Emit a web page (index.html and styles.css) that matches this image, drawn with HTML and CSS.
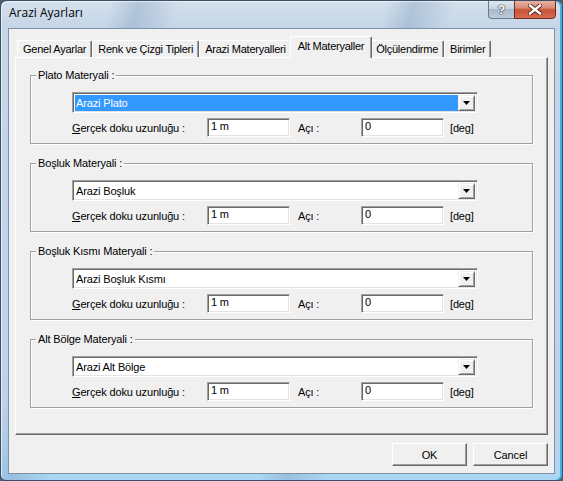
FILE: index.html
```html
<!DOCTYPE html>
<html>
<head>
<meta charset="utf-8">
<title>Arazi Ayarları</title>
<link rel="stylesheet" href="styles.css">
</head>
<body>
<div class="window">
  <div class="titlebar">
    <span class="title">Arazi Ayarları</span>
    <div class="caption-buttons">
      <div class="cbtn help"><span class="qmark">?</span></div>
      <div class="cbtn close">
        <svg width="14" height="11" viewBox="0 0 14 11">
          <path d="M2 1.5 L12 9.5 M12 1.5 L2 9.5" stroke="#5a1a12" stroke-width="4.2" stroke-linecap="square"/>
          <path d="M2 1.5 L12 9.5 M12 1.5 L2 9.5" stroke="#ffffff" stroke-width="2.4" stroke-linecap="square"/>
        </svg>
      </div>
    </div>
  </div>
  <div class="client">
    <div class="tabs">
      <div class="tab">Genel Ayarlar</div>
      <div class="tab">Renk ve Çizgi Tipleri</div>
      <div class="tab">Arazi Materyalleri</div>
      <div class="tab active">Alt Materyaller</div>
      <div class="tab">Ölçülendirme</div>
      <div class="tab">Birimler</div>
    </div>
    <div class="panel">
      <fieldset class="group">
        <legend>Plato Materyali :</legend>
        <div class="group-body">
          <div class="combo">
            <span class="combo-text selected">Arazi Plato</span>
            <span class="combo-btn"><svg width="7" height="4" viewBox="0 0 7 4"><polygon points="0,0 7,0 3.5,4" fill="#000"/></svg></span>
          </div>
          <div class="row">
            <span class="lbl"><u>G</u>erçek doku uzunluğu :</span>
            <span class="edit">1 m</span>
            <span class="lbl2">Açı :</span>
            <span class="edit">0</span>
            <span class="unit">[deg]</span>
          </div>
        </div>
      </fieldset>
      <fieldset class="group">
        <legend>Boşluk Materyali :</legend>
        <div class="group-body">
          <div class="combo">
            <span class="combo-text">Arazi Boşluk</span>
            <span class="combo-btn"><svg width="7" height="4" viewBox="0 0 7 4"><polygon points="0,0 7,0 3.5,4" fill="#000"/></svg></span>
          </div>
          <div class="row">
            <span class="lbl"><u>G</u>erçek doku uzunluğu :</span>
            <span class="edit">1 m</span>
            <span class="lbl2">Açı :</span>
            <span class="edit">0</span>
            <span class="unit">[deg]</span>
          </div>
        </div>
      </fieldset>
      <fieldset class="group">
        <legend>Boşluk Kısmı Materyali :</legend>
        <div class="group-body">
          <div class="combo">
            <span class="combo-text">Arazi Boşluk Kısmı</span>
            <span class="combo-btn"><svg width="7" height="4" viewBox="0 0 7 4"><polygon points="0,0 7,0 3.5,4" fill="#000"/></svg></span>
          </div>
          <div class="row">
            <span class="lbl"><u>G</u>erçek doku uzunluğu :</span>
            <span class="edit">1 m</span>
            <span class="lbl2">Açı :</span>
            <span class="edit">0</span>
            <span class="unit">[deg]</span>
          </div>
        </div>
      </fieldset>
      <fieldset class="group">
        <legend>Alt Bölge Materyali :</legend>
        <div class="group-body">
          <div class="combo">
            <span class="combo-text">Arazi Alt Bölge</span>
            <span class="combo-btn"><svg width="7" height="4" viewBox="0 0 7 4"><polygon points="0,0 7,0 3.5,4" fill="#000"/></svg></span>
          </div>
          <div class="row">
            <span class="lbl"><u>G</u>erçek doku uzunluğu :</span>
            <span class="edit">1 m</span>
            <span class="lbl2">Açı :</span>
            <span class="edit">0</span>
            <span class="unit">[deg]</span>
          </div>
        </div>
      </fieldset>
    </div>
    <div class="buttons">
      <div class="btn">OK</div>
      <div class="btn">Cancel</div>
    </div>
  </div>
</div>
</body>
</html>
```
FILE: styles.css
```css
* { box-sizing: border-box; }

html, body {
  margin: 0;
  padding: 0;
  background: #4b6076;
}

body {
  font-family: "Liberation Sans", Arial, sans-serif;
  font-size: 11px;
  letter-spacing: -0.15px;
  color: #000;
}

.window {
  width: 563px;
  height: 481px;
  display: flex;
  flex-direction: column;
  border: 1px solid #3b4f66;
  border-radius: 7px 7px 6px 6px;
  overflow: hidden;
  background:
    linear-gradient(105deg, transparent 0 16%, rgba(120,150,185,0.35) 20%, transparent 26%),
    linear-gradient(105deg, transparent 0 56%, rgba(120,150,185,0.35) 60%, transparent 66%),
    linear-gradient(to bottom, #d3dfeb 0, #c5d6e8 27px, #bcd3ea 90%, #a9d6f5 100%);
  box-shadow: inset -2px 0 0 #3bb2e4, inset 1px 1px 0 rgba(255,255,255,0.6);
}

.titlebar {
  height: 27px;
  flex: none;
  display: flex;
  justify-content: space-between;
  align-items: flex-start;
}

.title {
  font-family: "Open Sans", "Liberation Sans", sans-serif;
  font-size: 12px;
  letter-spacing: 0;
  line-height: 16px;
  padding: 4px 0 0 8px;
  color: #000;
}

.caption-buttons {
  display: flex;
  margin-right: 6px;
  margin-top: -1px;
}

.cbtn {
  height: 19px;
  display: flex;
  align-items: center;
  justify-content: center;
}

.cbtn.help {
  width: 26px;
  border: 1px solid #6b7b8f;
  border-right: none;
  border-radius: 0 0 0 4px;
  background: linear-gradient(to bottom, #dfe7ef 0, #c6d3e0 45%, #a9b9cb 50%, #bccbda 100%);
}

.qmark {
  font-family: "Liberation Sans", Arial, sans-serif;
  font-weight: bold;
  font-size: 13px;
  color: #fff;
  text-shadow: 0 0 1px #333, 0 0 1px #333, 0 0 1px #333;
}

.cbtn.close {
  width: 42px;
  border: 1px solid #6b2d24;
  border-radius: 0 0 4px 0;
  background: linear-gradient(to bottom, #e9b1a3 0, #d98d78 40%, #c8543a 52%, #d66a4e 100%);
}

.client {
  flex: none;
  height: 446px;
  margin: 0 7px;
  border: 1px solid #7f92a8;
  background: #f0f0f0;
  padding-top: 7px;
  display: flex;
  flex-direction: column;
}

.tabs {
  display: flex;
  align-items: flex-end;
  height: 22px;
  margin: 0 6px -1px 8px;
  position: relative;
  z-index: 1;
}

.tab {
  height: 17px;
  margin-bottom: 1px;
  padding: 1px 5px 0 5px;
  line-height: 14px;
  letter-spacing: -0.25px;
  background: #f0f0f0;
  border-top: 1px solid #fff;
  border-left: 1px solid #fff;
  border-right: 1px solid #696969;
  box-shadow: inset -1px 0 0 #a0a0a0;
  border-radius: 2px 2px 0 0;
  white-space: nowrap;
}

.tab.active {
  height: 22px;
  margin: 0 -2px;
  padding: 2px 7px 0 7px;
  position: relative;
  z-index: 2;
}

.panel {
  flex: none;
  height: 378px;
  margin: 0 6px;
  padding: 11px 14px 0 14px;
  background: #f0f0f0;
  border-top: 1px solid #fff;
  border-left: 1px solid #fff;
  border-right: 1px solid #696969;
  border-bottom: 1px solid #696969;
  box-shadow: inset -1px -1px 0 #a0a0a0;
}

.group {
  margin: 0 0 13px 0;
  padding: 0;
  min-width: 0;
  border: 1px solid #a0a0a0;
  box-shadow: 1px 1px 0 #fff, inset 1px 1px 0 #fff;
}

.group legend {
  margin-left: 5px;
  padding: 0 2px;
  line-height: 13px;
  font-size: 11px;
  background: #f0f0f0;
}

.group-body {
  padding: 10px 0 6px 41px;
}

.combo {
  width: 406px;
  height: 21px;
  display: flex;
  padding: 1px;
  border-top: 1px solid #a0a0a0;
  border-left: 1px solid #a0a0a0;
  border-right: 1px solid #fff;
  border-bottom: 1px solid #fff;
  box-shadow: inset 1px 1px 0 #696969, inset -1px -1px 0 #e3e3e3;
  background: #fff;
}

.combo-text {
  flex: 1;
  margin: 1px 0 0 1px;
  padding-left: 1px;
  line-height: 16px;
}

.combo-text.selected {
  background: #3399ff;
  color: #fff;
}

.combo-btn {
  width: 17px;
  margin: 1px 1px 0 0;
  display: flex;
  align-items: center;
  justify-content: center;
  background: #f0f0f0;
  border-top: 1px solid #f0f0f0;
  border-left: 1px solid #f0f0f0;
  border-right: 1px solid #696969;
  border-bottom: 1px solid #696969;
  box-shadow: inset 1px 1px 0 #fff, inset -1px -1px 0 #a0a0a0;
}

.row {
  display: flex;
  align-items: center;
  height: 19px;
  margin-top: 5px;
}

.lbl {
  width: 135px;
  white-space: nowrap;
}

.edit {
  width: 83px;
  height: 19px;
  padding: 0 0 0 3px;
  line-height: 15px;
  background: #fff;
  border-top: 1px solid #a0a0a0;
  border-left: 1px solid #a0a0a0;
  border-right: 1px solid #fff;
  border-bottom: 1px solid #fff;
  box-shadow: inset 1px 1px 0 #696969, inset -1px -1px 0 #e3e3e3;
}

.lbl2 {
  width: 71px;
  padding-left: 8px;
}

.unit {
  margin-left: 6px;
}

.buttons {
  display: flex;
  justify-content: flex-end;
  gap: 6px;
  margin-top: 8px;
  padding-right: 6px;
}

.btn {
  width: 75px;
  height: 23px;
  display: flex;
  align-items: center;
  justify-content: center;
  background: #f0f0f0;
  border-top: 1px solid #fff;
  border-left: 1px solid #fff;
  border-right: 1px solid #696969;
  border-bottom: 1px solid #696969;
  box-shadow: inset -1px -1px 0 #a0a0a0;
}
```
